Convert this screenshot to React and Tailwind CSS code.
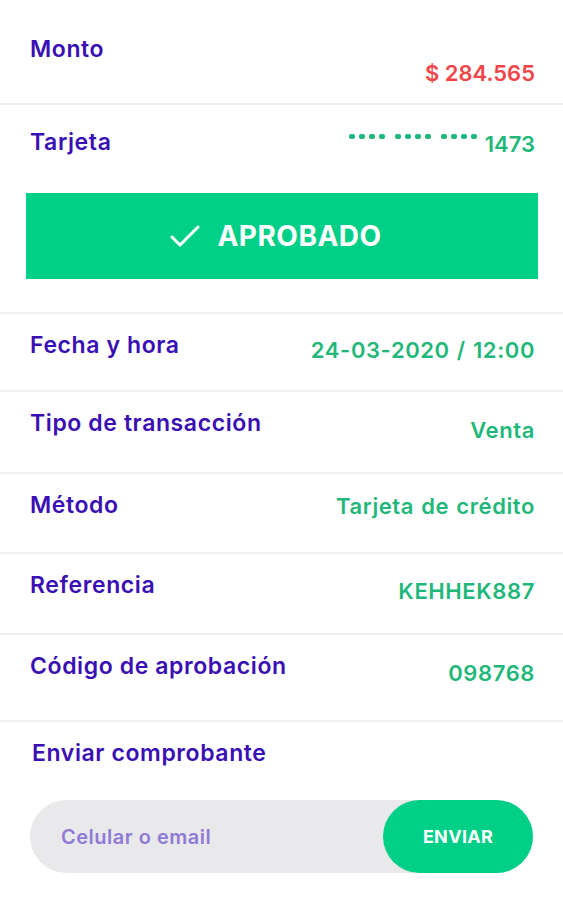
import React from "react";

const font = { fontFamily: "Inter, 'Noto Sans', sans-serif" };

function Divider() {
  return <div className="h-[2px] bg-[#efefef]" />;
}

const labelCls = "text-[23px] leading-none font-semibold tracking-[0.6px] text-[#3a0fb3]";
const valueCls = "text-[22px] leading-none font-semibold tracking-[0.6px] [word-spacing:1px] text-[#1fb87a]";

function Row({ label, value, h, vpt }) {
  return (
    <div className={`flex justify-between items-start pl-[30px] pr-[28px] ${h}`}>
      <div className={`pt-[20px] ${labelCls}`}>{label}</div>
      <div className={`${vpt} ${valueCls}`}>{value}</div>
    </div>
  );
}

export default function App() {
  return (
    <div className="w-[563px] h-[900px] bg-white overflow-hidden" style={font}>
      <div className="flex justify-between items-start pl-[30px] pr-[28px] h-[103px]">
        <div className={`pt-[38px] ${labelCls}`}>Monto</div>
        <div className="pt-[62px] text-[22px] leading-none font-semibold text-[#f0464a]">$ 284.565</div>
      </div>
      <Divider />
      <div className="flex justify-between items-start pl-[30px] pr-[28px] h-[88px]">
        <div className={`pt-[26px] ${labelCls}`}>Tarjeta</div>
        <div className="pt-[28px] flex items-start text-[22px] leading-none font-semibold text-[#1fb87a]">
          <span className="flex gap-[10px] mr-[8px] mt-[1px]">
            {[0, 1, 2].map((g) => (
              <span key={g} className="flex gap-[4px]">
                {[0, 1, 2, 3].map((i) => (
                  <span key={i} className="w-[6px] h-[5px] rounded-[2px] bg-[#1fb87a]" />
                ))}
              </span>
            ))}
          </span>
          <span>1473</span>
        </div>
      </div>
      <div className="ml-[26px] w-[512px] h-[86px] bg-[#00cf88] flex items-center justify-center gap-[17px] pr-[12px]">
        <svg width="30" height="24" viewBox="0 0 30 24" fill="none" stroke="white" strokeWidth="3" strokeLinecap="round" strokeLinejoin="round">
          <path d="M2 13 L10 21 L28 3" />
        </svg>
        <span className="text-[28px] leading-none font-bold tracking-[0.5px] text-white">APROBADO</span>
      </div>
      <div className="h-[33px]" />
      <Divider />
      <Row label="Fecha y hora" value="24-03-2020 / 12:00" h="h-[76px]" vpt="pt-[25px]" />
      <Divider />
      <Row label="Tipo de transacción" value="Venta" h="h-[80px]" vpt="pt-[27px]" />
      <Divider />
      <Row label="Método" value="Tarjeta de crédito" h="h-[78px]" vpt="pt-[21px]" />
      <Divider />
      <Row label="Referencia" value="KEHHEK887" h="h-[79px]" vpt="pt-[26px]" />
      <Divider />
      <Row label="Código de aprobación" value="098768" h="h-[85px]" vpt="pt-[27px]" />
      <Divider />
      <div className="pl-[32px] pr-[30px]">
        <div className={`pt-[20px] ${labelCls}`}>Enviar comprobante</div>
        <div className="mt-[35px] ml-[-2px] h-[73px] rounded-full bg-[#e9e8ea] flex items-center justify-between">
          <span className="pl-[31px] text-[20px] font-semibold tracking-[0.5px] text-[#8f7bd6]">Celular o email</span>
          <button className="h-[73px] w-[150px] rounded-full bg-[#00cf88] text-white text-[18px] font-bold tracking-[0.3px]">ENVIAR</button>
        </div>
      </div>
    </div>
  );
}
